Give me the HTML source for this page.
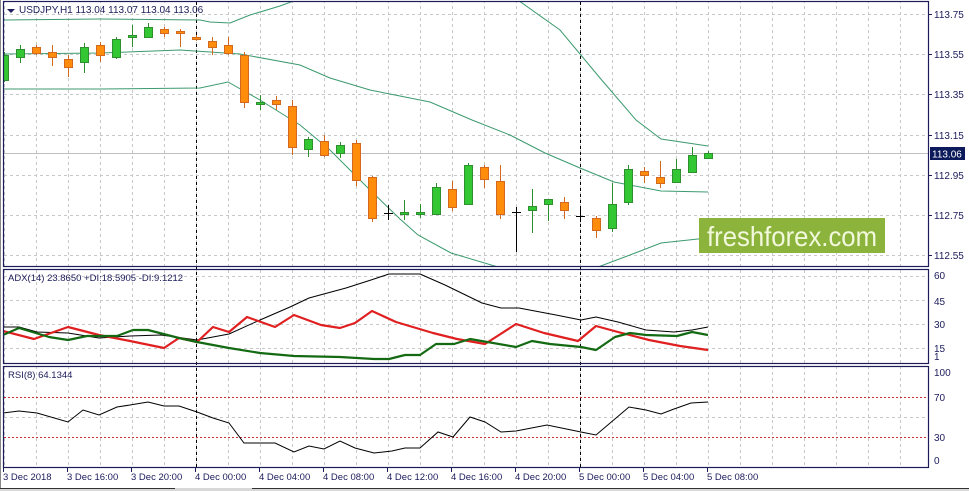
<!DOCTYPE html>
<html><head><meta charset="utf-8"><style>
html,body{margin:0;padding:0;background:#fff;}
svg{display:block;font-family:"Liberation Sans",sans-serif;}
</style></head><body>
<svg width="969" height="491" viewBox="0 0 969 491" xmlns="http://www.w3.org/2000/svg">
<rect width="969" height="491" fill="#fff"/>
<defs>
<pattern id="vg" x="4" y="0" width="32" height="491" patternUnits="userSpaceOnUse">
<line x1="0.5" y1="0" x2="0.5" y2="491" stroke="#c8c8c8" stroke-dasharray="3,3"/>
</pattern>
<clipPath id="cm"><rect x="4" y="2" width="924" height="264"/></clipPath>
<clipPath id="ca"><rect x="4" y="270" width="924" height="93"/></clipPath>
<clipPath id="cr"><rect x="4" y="367" width="924" height="100"/></clipPath>
</defs>
<!-- grids -->
<rect x="4" y="2" width="924" height="264" fill="url(#vg)"/>
<rect x="4" y="270" width="924" height="93" fill="url(#vg)"/>
<rect x="4" y="367" width="924" height="100" fill="url(#vg)"/>
<g stroke="#c8c8c8" stroke-dasharray="3,3">
<line x1="4" y1="14.5" x2="928" y2="14.5"/><line x1="4" y1="54.5" x2="928" y2="54.5"/>
<line x1="4" y1="94.5" x2="928" y2="94.5"/><line x1="4" y1="135.5" x2="928" y2="135.5"/>
<line x1="4" y1="175.5" x2="928" y2="175.5"/><line x1="4" y1="215.5" x2="928" y2="215.5"/>
<line x1="4" y1="255.5" x2="928" y2="255.5"/>
<line x1="4" y1="276.5" x2="928" y2="276.5"/><line x1="4" y1="300.5" x2="928" y2="300.5"/>
<line x1="4" y1="324.5" x2="928" y2="324.5"/><line x1="4" y1="348.5" x2="928" y2="348.5"/>
<line x1="4" y1="417.5" x2="928" y2="417.5"/>
</g>
<!-- price line -->
<line x1="4" y1="153.5" x2="928" y2="153.5" stroke="#c0c0c0"/>
<!-- day separators -->
<g stroke="#000" stroke-dasharray="3,3">
<line x1="196.5" y1="2" x2="196.5" y2="467"/><line x1="580.5" y1="2" x2="580.5" y2="467"/>
</g>
<!-- bollinger -->
<g clip-path="url(#cm)" fill="none" stroke="#3c9a6e" stroke-width="1">
<polyline points="3,20 100,19 200,20 210,22 230,23 250,15 280,6 310,-5"/>
<polyline points="515,-2 560,30 600,78 636,120 661,139 708,146"/>
<polyline points="3,54 100,53 180,50 240,54 300,65 330,78 370,90 400,96 430,102 472,120 510,135 545,153 580,168 614,182 661,191 708,192"/>
<polyline points="3,89 100,89 200,88 228,82 260,100 300,125 330,150 370,190 400,219 418,235 451,253 498,267"/>
<polyline points="598,267 630,255 661,243 698,239 712,238"/>
</g>
<!-- candles -->
<g clip-path="url(#cm)" stroke-width="1">
<g stroke="#2d8f2d" fill="#34c734">
<line x1="4.5" y1="52" x2="4.5" y2="82"/><rect x="0.5" y="55.5" width="8" height="25"/>
<line x1="20.5" y1="45" x2="20.5" y2="63"/><rect x="16.5" y="49.5" width="8" height="8"/>
<line x1="84.5" y1="43" x2="84.5" y2="73"/><rect x="80.5" y="47.5" width="8" height="15"/>
<line x1="116.5" y1="37" x2="116.5" y2="59"/><rect x="112.5" y="39.5" width="8" height="18"/>
<line x1="132.5" y1="25" x2="132.5" y2="47"/><rect x="128.5" y="35.5" width="8" height="2"/>
<line x1="148.5" y1="23" x2="148.5" y2="37"/><rect x="144.5" y="27.5" width="8" height="10"/>
<line x1="260.5" y1="95" x2="260.5" y2="110"/><rect x="256.5" y="102.5" width="8" height="2"/>
<line x1="308.5" y1="137" x2="308.5" y2="157"/><rect x="304.5" y="139.5" width="8" height="10"/>
<line x1="340.5" y1="142" x2="340.5" y2="158"/><rect x="336.5" y="145.5" width="8" height="8"/>
<line x1="404.5" y1="200" x2="404.5" y2="220"/><rect x="400.5" y="212.5" width="8" height="2"/>
<line x1="420.5" y1="204" x2="420.5" y2="218"/><rect x="416.5" y="212.5" width="8" height="2"/>
<line x1="436.5" y1="183" x2="436.5" y2="214"/><rect x="432.5" y="187.5" width="8" height="27"/>
<line x1="468.5" y1="163" x2="468.5" y2="204"/><rect x="464.5" y="165.5" width="8" height="39"/>
<line x1="532.5" y1="189" x2="532.5" y2="233"/><rect x="528.5" y="206.5" width="8" height="4"/>
<line x1="548.5" y1="199" x2="548.5" y2="221"/><rect x="544.5" y="199.5" width="8" height="5"/>
<line x1="612.5" y1="183" x2="612.5" y2="232"/><rect x="608.5" y="204.5" width="8" height="24"/>
<line x1="628.5" y1="165" x2="628.5" y2="205"/><rect x="624.5" y="169.5" width="8" height="33"/>
<line x1="676.5" y1="159" x2="676.5" y2="183"/><rect x="672.5" y="169.5" width="8" height="13"/>
<line x1="692.5" y1="147" x2="692.5" y2="172"/><rect x="688.5" y="155.5" width="8" height="17"/>
<line x1="708.5" y1="151" x2="708.5" y2="158"/><rect x="704.5" y="153.5" width="8" height="5"/>
</g>
<g stroke="#d2691e" fill="#ff8c0a">
<line x1="36.5" y1="45" x2="36.5" y2="55"/><rect x="32.5" y="47.5" width="8" height="6"/>
<line x1="52.5" y1="45" x2="52.5" y2="66"/><rect x="48.5" y="52.5" width="8" height="5"/>
<line x1="68.5" y1="55" x2="68.5" y2="77"/><rect x="64.5" y="59.5" width="8" height="8"/>
<line x1="100.5" y1="42" x2="100.5" y2="62"/><rect x="96.5" y="45.5" width="8" height="10"/>
<line x1="164.5" y1="27" x2="164.5" y2="37"/><rect x="160.5" y="29.5" width="8" height="4"/>
<line x1="180.5" y1="29" x2="180.5" y2="47"/><rect x="176.5" y="31.5" width="8" height="2"/>
<line x1="196.5" y1="35" x2="196.5" y2="41"/><rect x="192.5" y="37.5" width="8" height="2"/>
<line x1="212.5" y1="37" x2="212.5" y2="55"/><rect x="208.5" y="41.5" width="8" height="6"/>
<line x1="228.5" y1="37" x2="228.5" y2="55"/><rect x="224.5" y="45.5" width="8" height="8"/>
<line x1="244.5" y1="52" x2="244.5" y2="108"/><rect x="240.5" y="55.5" width="8" height="47"/>
<line x1="276.5" y1="96" x2="276.5" y2="110"/><rect x="272.5" y="100.5" width="8" height="4"/>
<line x1="292.5" y1="100" x2="292.5" y2="155"/><rect x="288.5" y="106.5" width="8" height="41"/>
<line x1="324.5" y1="135" x2="324.5" y2="157"/><rect x="320.5" y="141.5" width="8" height="14"/>
<line x1="356.5" y1="140" x2="356.5" y2="186"/><rect x="352.5" y="143.5" width="8" height="37"/>
<line x1="372.5" y1="176" x2="372.5" y2="222"/><rect x="368.5" y="177.5" width="8" height="41"/>
<line x1="452.5" y1="181" x2="452.5" y2="211"/><rect x="448.5" y="189.5" width="8" height="18"/>
<line x1="484.5" y1="165" x2="484.5" y2="188"/><rect x="480.5" y="167.5" width="8" height="12"/>
<line x1="500.5" y1="165" x2="500.5" y2="219"/><rect x="496.5" y="181.5" width="8" height="33"/>
<line x1="564.5" y1="197" x2="564.5" y2="219"/><rect x="560.5" y="202.5" width="8" height="8"/>
<line x1="596.5" y1="216" x2="596.5" y2="238"/><rect x="592.5" y="218.5" width="8" height="12"/>
<line x1="644.5" y1="167" x2="644.5" y2="183"/><rect x="640.5" y="171.5" width="8" height="4"/>
<line x1="660.5" y1="161" x2="660.5" y2="188"/><rect x="656.5" y="177.5" width="8" height="6"/>
</g>
<g stroke="#000">
<line x1="388.5" y1="205" x2="388.5" y2="220"/><line x1="384" y1="213.5" x2="393" y2="213.5"/>
<line x1="516.5" y1="207" x2="516.5" y2="252"/><line x1="512" y1="212.5" x2="521" y2="212.5"/>
<line x1="580.5" y1="206" x2="580.5" y2="222"/><line x1="576" y1="216.5" x2="585" y2="216.5"/>
</g>
</g>
<!-- logo -->
<rect x="699" y="218" width="186" height="35" fill="#8cb33c"/>
<text x="792" y="246" font-size="28" fill="#f2f8dc" text-anchor="middle" textLength="170" lengthAdjust="spacingAndGlyphs">freshforex.com</text>
<!-- ADX -->
<g clip-path="url(#ca)" fill="none" stroke-linejoin="round">
<polyline stroke="#000" stroke-width="1" points="3,327 19,327 37,332 68,333 99,338 130,336 161,335 197,340 229,334 260,320 290,307 309,298 346,288 371,280 389,274 420,274 445,285 482,303 501,308 519,308 556,315 581,320 596,317 618,322 646,330 674,332 692,330 708,327"/>
<polyline stroke="#e02020" stroke-width="2.2" points="3,331 34,339 68,327 99,335 130,341 164,348 179,338 197,342 213,327 229,332 247,317 275,327 294,315 321,325 340,328 355,323 372,311 396,322 433,333 457,339 485,344 516,324 544,333 578,341 596,326 618,332 649,340 680,346 708,350"/>
<polyline stroke="#136a13" stroke-width="2.2" points="3,335 19,328 49,337 68,340 87,336 117,336 133,330 148,330 179,338 197,342 229,348 260,353 294,356 340,357 374,359 389,359 405,355 420,355 436,344 454,344 470,339 516,347 532,341 550,344 581,347 596,350 615,337 630,333 646,335 677,336 692,332 708,335"/>
</g>
<!-- RSI -->
<g stroke="#c83232" stroke-dasharray="2,2">
<line x1="4" y1="397.5" x2="928" y2="397.5"/><line x1="4" y1="437.5" x2="928" y2="437.5"/>
</g>
<g clip-path="url(#cr)">
<polyline fill="none" stroke="#000" stroke-width="1" points="3,413 19,411 37,413 68,422 83,410 99,415 117,407 130,405 148,402 164,406 179,406 197,412 213,418 229,423 244,443 275,443 294,452 309,446 324,449 340,441 355,448 374,453 392,451 405,448 420,448 438,432 453,437 470,417 485,422 501,432 516,431 547,425 581,432 596,435 629,407 646,410 661,414 674,409 691,403 708,402"/>
</g>
<!-- panel borders -->
<g fill="none" stroke="#1c1c5a" stroke-width="1.2">
<rect x="3.5" y="1.5" width="925" height="265"/>
<rect x="3.5" y="269.5" width="925" height="94"/>
<rect x="3.5" y="366.5" width="925" height="101"/>
</g>
<!-- title texts -->
<polygon points="7,9 15,9 11,13" fill="#1c1c5a"/>
<text x="19" y="13" font-size="10" fill="#1c1c5a">USDJPY,H1  113.04 113.07 113.04 113.06</text>
<text x="8" y="281" font-size="9.5" fill="#1c1c5a">ADX(14) 23.8650 +DI:18.5905 -DI:9.1212</text>
<text x="8" y="378" font-size="9.5" fill="#1c1c5a">RSI(8) 64.1344</text>
<!-- right axis -->
<g stroke="#1c1c5a">
<line x1="929" y1="14.5" x2="932" y2="14.5"/><line x1="929" y1="54.5" x2="932" y2="54.5"/>
<line x1="929" y1="94.5" x2="932" y2="94.5"/><line x1="929" y1="135.5" x2="932" y2="135.5"/>
<line x1="929" y1="175.5" x2="932" y2="175.5"/><line x1="929" y1="215.5" x2="932" y2="215.5"/>
<line x1="929" y1="255.5" x2="932" y2="255.5"/>
</g>
<g font-size="10" fill="#1c1c5a">
<text x="934" y="18">113.75</text><text x="934" y="58">113.55</text>
<text x="934" y="98">113.35</text><text x="934" y="139">113.15</text>
<text x="934" y="179">112.95</text><text x="934" y="219">112.75</text>
<text x="934" y="259">112.55</text>
<text x="934" y="279">60</text><text x="934" y="305">45</text>
<text x="934" y="328">30</text><text x="934" y="352">15</text>
<text x="934" y="360">1</text>
<text x="934" y="376">100</text><text x="934" y="401">70</text>
<text x="934" y="441">30</text><text x="934" y="464">0</text>
</g>
<rect x="930" y="147" width="35" height="13" fill="#0c1a5c"/>
<text x="932" y="157.5" font-size="10" fill="#fff">113.06</text>
<!-- time axis -->
<g stroke="#1c1c5a">
<line x1="3.5" y1="467" x2="3.5" y2="472"/><line x1="67.5" y1="467" x2="67.5" y2="472"/>
<line x1="131.5" y1="467" x2="131.5" y2="472"/><line x1="195.5" y1="467" x2="195.5" y2="472"/>
<line x1="259.5" y1="467" x2="259.5" y2="472"/><line x1="323.5" y1="467" x2="323.5" y2="472"/>
<line x1="387.5" y1="467" x2="387.5" y2="472"/><line x1="451.5" y1="467" x2="451.5" y2="472"/>
<line x1="515.5" y1="467" x2="515.5" y2="472"/><line x1="579.5" y1="467" x2="579.5" y2="472"/>
<line x1="643.5" y1="467" x2="643.5" y2="472"/><line x1="707.5" y1="467" x2="707.5" y2="472"/>
</g>
<g font-size="9.5" fill="#1c1c5a">
<text x="3" y="480">3 Dec 2018</text><text x="67" y="480">3 Dec 16:00</text>
<text x="131" y="480">3 Dec 20:00</text><text x="195" y="480">4 Dec 00:00</text>
<text x="259" y="480">4 Dec 04:00</text><text x="323" y="480">4 Dec 08:00</text>
<text x="387" y="480">4 Dec 12:00</text><text x="451" y="480">4 Dec 16:00</text>
<text x="515" y="480">4 Dec 20:00</text><text x="579" y="480">5 Dec 00:00</text>
<text x="643" y="480">5 Dec 04:00</text><text x="707" y="480">5 Dec 08:00</text>
</g>
<!-- bottom strip -->
<rect x="0" y="488" width="969" height="3" fill="#d8d8d8"/>
<line x1="0" y1="488.5" x2="175" y2="488.5" stroke="#333"/>
<line x1="252" y1="488.5" x2="969" y2="488.5" stroke="#333"/>
<line x1="0.5" y1="0" x2="0.5" y2="488" stroke="#888"/>
</svg>
</body></html>
